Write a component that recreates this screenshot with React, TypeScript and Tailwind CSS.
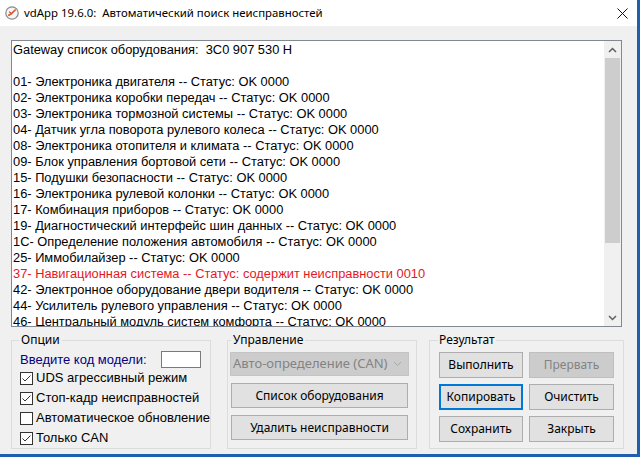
import React from "react";

const lines: { t: string; red?: boolean }[] = [
  { t: "Gateway список оборудования:  3C0 907 530 H" },
  { t: " " },
  { t: "01- Электроника двигателя -- Статус: OK 0000" },
  { t: "02- Электроника коробки передач -- Статус: OK 0000" },
  { t: "03- Электроника тормозной системы -- Статус: OK 0000" },
  { t: "04- Датчик угла поворота рулевого колеса -- Статус: OK 0000" },
  { t: "08- Электроника отопителя и климата -- Статус: OK 0000" },
  { t: "09- Блок управления бортовой сети -- Статус: OK 0000" },
  { t: "15- Подушки безопасности -- Статус: OK 0000" },
  { t: "16- Электроника рулевой колонки -- Статус: OK 0000" },
  { t: "17- Комбинация приборов -- Статус: OK 0000" },
  { t: "19- Диагностический интерфейс шин данных -- Статус: OK 0000" },
  { t: "1C- Определение положения автомобиля -- Статус: OK 0000" },
  { t: "25- Иммобилайзер -- Статус: OK 0000" },
  { t: "37- Навигационная система -- Статус: содержит неисправности 0010", red: true },
  { t: "42- Электронное оборудование двери водителя -- Статус: OK 0000" },
  { t: "44- Усилитель рулевого управления -- Статус: OK 0000" },
  { t: "46- Центральный модуль систем комфорта -- Статус: OK 0000" },
  { t: "52- Электроника двери переднего пассажира -- Статус: OK 0000" },
];

function Check({ checked }: { checked: boolean }) {
  return (
    <span className="w-[13px] h-[13px] border border-[#333333] bg-white flex items-center justify-center shrink-0">
      {checked && (
        <svg width="11" height="11" viewBox="0 0 11 11">
          <path d="M1.5 5.5 L4 8 L9.5 2.5" fill="none" stroke="#333333" strokeWidth="1" />
        </svg>
      )}
    </span>
  );
}

function Btn({
  label,
  cls,
  variant = "normal",
}: {
  label: string;
  cls: string;
  variant?: "normal" | "disabled" | "focus";
}) {
  const v =
    variant === "disabled"
      ? "bg-[#cccccc] border border-[#bfbfbf] text-[#838383]"
      : variant === "focus"
      ? "bg-[#e1e1e1] border-2 border-[#0078d7] text-black"
      : "bg-[#e1e1e1] border border-[#adadad] text-black";
  return (
    <div
      className={`${cls} ${v} flex items-center justify-center font-['Noto_Sans',sans-serif] text-[12px] leading-none`}
    >
      {label}
    </div>
  );
}

export default function App() {
  const ui = "font-['Noto_Sans',sans-serif] text-[12px]";
  const arial = "font-['Liberation_Sans',Arial,sans-serif] text-[13px]";
  return (
    <div className="w-[640px] h-[457px] flex flex-col bg-[#f0f0f0] overflow-hidden">
      <div className="flex flex-1 min-h-0">
        <div className="w-[637px] flex flex-col">
          {/* title bar */}
          <div className="h-[26px] bg-white flex items-center shrink-0">
            <svg width="16" height="16" viewBox="0 0 16 16" className="ml-[4px]">
              <circle cx="8" cy="8" r="6.2" fill="#f6f6f6" stroke="#8a8a8a" strokeWidth="1.2" />
              <path d="M4.8 10.2 L8 8.2 L11.2 5" fill="none" stroke="#e0572b" strokeWidth="1.7" strokeLinecap="round" />
              <path d="M5.5 7 L7.6 8.8" fill="none" stroke="#e0572b" strokeWidth="1.3" strokeLinecap="round" />
            </svg>
            <span className="font-['Noto_Sans',sans-serif] text-[11.4px] ml-[4px] text-black whitespace-pre">
              vdApp 19.6.0:  Автоматический поиск неисправностей
            </span>
            <svg width="11" height="11" viewBox="0 0 11 11" className="ml-auto mr-[9px]">
              <path d="M0.5 0.5 L10.5 10.5 M10.5 0.5 L0.5 10.5" stroke="#111" strokeWidth="1" />
            </svg>
          </div>

          {/* client */}
          <div className="flex flex-col pl-[11px] pt-[14px]">
            {/* text box */}
            <div className="w-[611px] h-[287px] border border-[#828790] bg-white flex">
              <div className="flex-1 overflow-hidden pt-[1px] pl-[1px] font-['Liberation_Sans',Arial,sans-serif] text-[12.85px] leading-[16px]">
                {lines.map((l, i) => (
                  <div
                    key={i}
                    className={`h-[16px] whitespace-pre ${l.red ? "text-[#e3191f]" : "text-black"}`}
                  >
                    {l.t}
                  </div>
                ))}
              </div>
              <div className="w-[17px] bg-[#f0f0f0] flex flex-col">
                <div className="h-[17px] flex items-center justify-center">
                  <svg width="9" height="6" viewBox="0 0 9 6">
                    <path d="M1 5 L4.5 1.5 L8 5" fill="none" stroke="#606060" strokeWidth="1.5" />
                  </svg>
                </div>
                <div className="h-[185px] mx-[1px] bg-[#cdcdcd]" />
                <div className="flex-1" />
                <div className="h-[17px] flex items-center justify-center">
                  <svg width="9" height="6" viewBox="0 0 9 6">
                    <path d="M1 1 L4.5 4.5 L8 1" fill="none" stroke="#606060" strokeWidth="1.5" />
                  </svg>
                </div>
              </div>
            </div>

            {/* groups */}
            <div className="flex mt-[5px]">
              {/* Опции */}
              <fieldset className="w-[198px] h-[117px] border border-[#dcdcdc]">
                <legend className={`${ui} ml-[7px] px-[2px] leading-[16px] text-black`}>Опции</legend>
                <div className="flex items-center h-[17px] mt-[3px] pl-[8px] pr-[9px]">
                  <span className={`${arial} text-[#000080]`}>Введите код модели:</span>
                  <span className="ml-auto w-[40px] h-[17px] bg-white border border-[#7a7a7a]" />
                </div>
                {[
                  { l: "UDS агрессивный режим", c: true },
                  { l: "Стоп-кадр неисправностей", c: true },
                  { l: "Автоматическое обновление", c: false },
                  { l: "Только CAN", c: true },
                ].map((r) => (
                  <div key={r.l} className="h-[20px] flex items-center pl-[8px] gap-[3px]">
                    <Check checked={r.c} />
                    <span className={`${arial} text-black whitespace-nowrap`}>{r.l}</span>
                  </div>
                ))}
              </fieldset>

              {/* Управление */}
              <fieldset className="ml-[16px] w-[190px] h-[117px] border border-[#dcdcdc]">
                <legend className={`${ui} ml-[3px] px-[2px] leading-[16px] text-black`}>Управление</legend>
                <div className="mt-[4px] ml-[2px] w-[179px] h-[24px] bg-[#cccccc] border border-[#c4c4c4] flex items-center pl-[2px] pr-[6px]">
                  <span className="font-['Noto_Sans',sans-serif] text-[13px] text-[#838383] whitespace-nowrap">
                    Авто-определение (CAN)
                  </span>
                  <svg width="9" height="6" viewBox="0 0 9 6" className="ml-auto">
                    <path d="M1 1 L4.5 4.5 L8 1" fill="none" stroke="#a8a8a8" strokeWidth="1" />
                  </svg>
                </div>
                <Btn label="Список оборудования" cls="mt-[7px] ml-[3px] w-[177px] h-[25px]" />
                <Btn label="Удалить неисправности" cls="mt-[7px] ml-[3px] w-[177px] h-[25px]" />
              </fieldset>

              {/* Результат */}
              <fieldset className="ml-[12px] w-[195px] h-[117px] border border-[#dcdcdc]">
                <legend className={`${ui} ml-[8px] px-[1px] leading-[16px] text-black`}>Результат</legend>
                <div className="mt-[4px] ml-[9px] grid grid-cols-[84px_85px] gap-x-[6px] gap-y-[6px]">
                  <Btn label="Выполнить" cls="h-[26px]" />
                  <Btn label="Прервать" cls="h-[26px]" variant="disabled" />
                  <Btn label="Копировать" cls="h-[26px]" variant="focus" />
                  <Btn label="Очистить" cls="h-[26px]" />
                  <Btn label="Сохранить" cls="h-[26px]" />
                  <Btn label="Закрыть" cls="h-[26px]" />
                </div>
              </fieldset>
            </div>
          </div>
        </div>
        <div className="w-[3px] bg-[#1f5fae]" />
      </div>
      <div className="h-[3px] bg-[#1f5fae] shrink-0" />
    </div>
  );
}
